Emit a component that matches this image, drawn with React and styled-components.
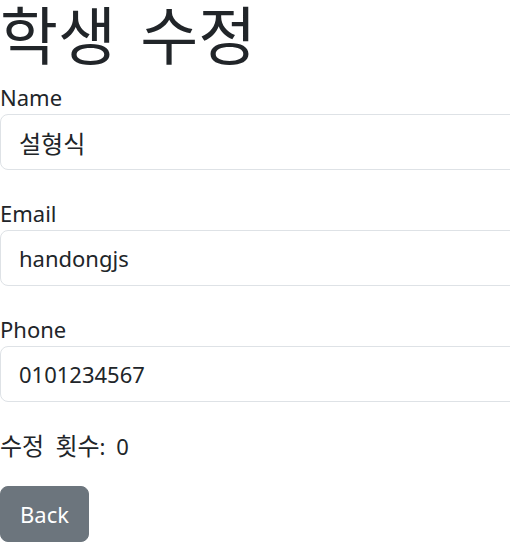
import styled, { createGlobalStyle } from "styled-components";

const GlobalStyle = createGlobalStyle`
  html, body {
    margin: 0;
    padding: 0;
    background: #fff;
    overflow-x: hidden;
  }
  body {
    font-family: "Noto Sans", "Noto Sans CJK KR", sans-serif;
    font-size: 22px;
    line-height: 1.5;
    color: #212529;
  }
`;

const Page = styled.div`
  overflow: hidden;
`;

const Title = styled.h1`
  margin: 0 0 11px;
  font-size: 63px;
  font-weight: 400;
  line-height: 70px;
  word-spacing: 8px;
`;

const Form = styled.form`
  display: flex;
  flex-direction: column;
  gap: 27px;
`;

const Group = styled.div`
  display: flex;
  flex-direction: column;
`;

const Label = styled.label`
  display: block;
  font-size: 22px;
  line-height: 33px;
`;

const Input = styled.input`
  box-sizing: border-box;
  width: calc(100% + 20px);
  height: 56px;
  padding: 0 18px;
  font-family: inherit;
  font-size: ${(p) => (p.$korean ? "24px" : "22px")};
  color: #212529;
  background: #fff;
  border: 1px solid #dee2e6;
  border-radius: 8px;
  outline: none;
`;

const Count = styled.p`
  margin: 27px 0 0;
  font-size: 22px;
  line-height: 33px;
  word-spacing: 5px;
`;

const Ko = styled.span`
  font-size: 24px;
`;

const Button = styled.button`
  margin-top: 23px;
  height: 56px;
  padding: 0 19px;
  font-family: inherit;
  font-size: 22px;
  color: #fff;
  background: #6c757d;
  border: 1px solid #6c757d;
  border-radius: 8px;
  cursor: pointer;
`;

const fields = [
  { id: "name", label: "Name", value: "설형식", korean: true },
  { id: "email", label: "Email", value: "handongjs" },
  { id: "phone", label: "Phone", value: "0101234567" },
];

export default function App() {
  return (
    <Page>
      <GlobalStyle />
      <Title>학생 수정</Title>
      <Form onSubmit={(e) => e.preventDefault()}>
        {fields.map((f) => (
          <Group key={f.id}>
            <Label htmlFor={f.id}>{f.label}</Label>
            <Input id={f.id} defaultValue={f.value} $korean={f.korean} />
          </Group>
        ))}
      </Form>
      <Count>
        <Ko>수정 횟수</Ko>: 0
      </Count>
      <Button type="button">Back</Button>
    </Page>
  );
}
